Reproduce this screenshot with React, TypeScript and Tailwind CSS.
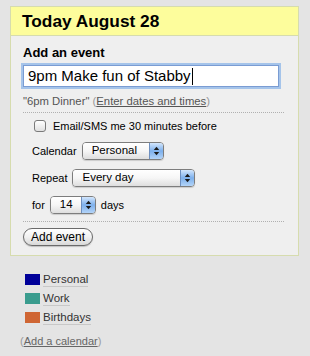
import React from "react";

function Arrows() {
  return (
    <svg width="7" height="10" viewBox="0 0 7 10">
      <path d="M3.5 0.8 L6.2 4 L0.8 4 Z" fill="#1a1a1a" />
      <path d="M3.5 9.2 L6.2 6 L0.8 6 Z" fill="#1a1a1a" />
    </svg>
  );
}

function Select({ label, width }: { label: string; width: string }) {
  return (
    <div
      className={`flex h-[18px] ${width} overflow-hidden rounded-[4px] border border-[#7d7d7d] shadow-[0_1px_1px_rgba(0,0,0,0.15)]`}
    >
      <div className="flex flex-1 items-center bg-gradient-to-b from-white via-[#f6f6f6] to-[#dedede] pl-[9px] text-[11.5px] text-black">
        {label}
      </div>
      <div className="flex w-[14px] items-center justify-center border-l border-[#6e8fbf] bg-gradient-to-b from-[#d3e6fc] via-[#7db0ec] to-[#b3d4f8]">
        <Arrows />
      </div>
    </div>
  );
}

const calendars = [
  { name: "Personal", color: "bg-[#000099]" },
  { name: "Work", color: "bg-[#3a9c8e]" },
  { name: "Birthdays", color: "bg-[#cf6634]" },
];

export default function App() {
  return (
    <div className="h-[356px] w-[310px] overflow-hidden bg-[#e4e4e4] pt-[6px] font-['Liberation_Sans',Arial,sans-serif] text-[#222]">
      <div className="ml-[10px] w-[289px] border border-[#d6dcae] bg-[#efefef]">
        <div className="flex h-[29px] items-center border-b border-[#d6dcae] bg-[#fdfd9c] pt-[1px] pl-[11px] text-[17.3px] font-bold text-black">
          Today August 28
        </div>

        <div className="pt-[9px] pr-[14px] pb-[9px] pl-[12px]">
          <div className="text-[13px] leading-[16px] font-bold text-black">Add an event</div>

          <div className="mt-[4px] flex h-[22px] w-[256px] items-center border border-[#7a9cd3] bg-white pl-[4px] text-[15px] text-black shadow-[0_0_0_2px_#a5c4ea]">
            9pm Make fun of Stabby
            <span className="ml-[1px] inline-block h-[17px] w-px bg-black" />
          </div>

          <div className="mt-[8px] text-[11.3px] leading-[13px] text-[#555]">
            "6pm Dinner" <span className="text-[#999]">(</span>
            <span className="underline">Enter dates and times</span>
            <span className="text-[#999]">)</span>
          </div>

          <div className="mt-[4px] border-t border-dotted border-[#b0b0b0]" />

          <div className="flex flex-col gap-[9px] pt-[7px] pl-[9px]">
            <label className="mb-[1px] flex h-[12px] items-center gap-[7px] pl-[2px] text-[11px] text-black">
              <span className="inline-block h-[12px] w-[12px] rounded-[3px] border border-[#7a7a7a] bg-gradient-to-b from-white to-[#e0e0e0]" />
              Email/SMS me 30 minutes before
            </label>

            <div className="flex items-center gap-[5px] text-[11px] text-black">
              Calendar
              <Select label="Personal" width="w-[82px]" />
            </div>

            <div className="flex items-center gap-[5px] text-[11px] text-black">
              Repeat
              <Select label="Every day" width="w-[123px]" />
            </div>

            <div className="flex items-center gap-[5px] text-[11px] text-black">
              for
              <Select label="14" width="w-[46px]" />
              days
            </div>
          </div>

          <div className="mt-[7px] border-t border-dotted border-[#b0b0b0]" />

          <button className="mt-[6px] flex h-[18px] items-center rounded-full border border-[#6a6a6a] bg-gradient-to-b from-white via-[#f1f1f1] to-[#d8d8d8] px-[7px] text-[12px] leading-none text-black shadow-[0_1px_1px_rgba(0,0,0,0.2)]">
            Add event
          </button>
        </div>
      </div>

      <div className="flex flex-col gap-[8px] pt-[18px] pl-[25px]">
        {calendars.map((c) => (
          <div key={c.name} className="flex h-[11px] items-center gap-[3px]">
            <span className={`inline-block h-[11px] w-[15px] ${c.color}`} />
            <span className="border-b border-[#c8c8c8] text-[11.5px] leading-[14px] text-[#333]">
              {c.name}
            </span>
          </div>
        ))}
      </div>

      <div className="mt-[12px] pl-[20px] text-[11px] leading-[13px] text-[#666]">
        <span className="text-[#999]">(</span>
        <span className="underline">Add a calendar</span>
        <span className="text-[#999]">)</span>
      </div>
    </div>
  );
}
